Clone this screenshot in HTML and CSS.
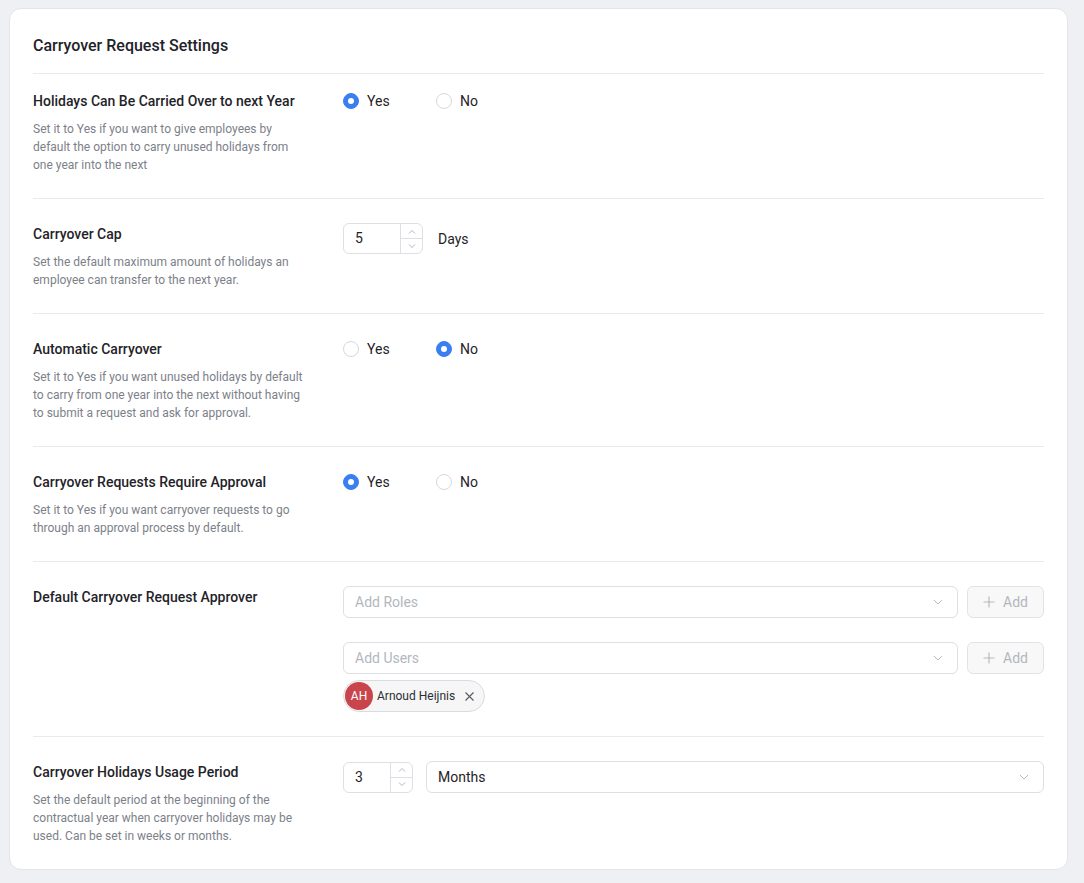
FILE: index.html
```html
<!DOCTYPE html>
<html lang="en">
<head>
    <meta charset="UTF-8">
    <meta name="viewport" content="width=device-width, initial-scale=1.0">
    <title>Carryover Request Settings</title>
    <link rel="stylesheet" href="styles.css">
</head>
<body>
    <div class="card">
        <div class="card-header">
            <h2>Carryover Request Settings</h2>
        </div>

        <!-- Carry over -->
        <div class="setting-row first">
            <div class="setting-info">
                <h3>Holidays Can Be Carried Over to next Year</h3>
                <p>Set it to Yes if you want to give employees by default the option to carry unused holidays from one year into the next</p>
            </div>
            <div class="setting-control">
                <div class="radio-group">
                    <label class="radio-option"><span class="radio checked"></span>Yes</label>
                    <label class="radio-option"><span class="radio"></span>No</label>
                </div>
            </div>
        </div>

        <!-- Cap -->
        <div class="setting-row">
            <div class="setting-info">
                <h3>Carryover Cap</h3>
                <p>Set the default maximum amount of holidays an employee can transfer to the next year.</p>
            </div>
            <div class="setting-control">
                <div class="inline-row">
                    <div class="number-input wide">
                        <span class="number-value">5</span>
                        <div class="stepper">
                            <span class="step">
                                <svg width="8" height="5" viewBox="0 0 8 5"><path d="M1 4.5L4 1.5L7 4.5" fill="none" stroke="#a9adb4" stroke-width="0.9"/></svg>
                            </span>
                            <span class="step">
                                <svg width="8" height="5" viewBox="0 0 8 5"><path d="M1 0.5L4 3.5L7 0.5" fill="none" stroke="#a9adb4" stroke-width="0.9"/></svg>
                            </span>
                        </div>
                    </div>
                    <span class="unit">Days</span>
                </div>
            </div>
        </div>

        <!-- Automatic -->
        <div class="setting-row">
            <div class="setting-info">
                <h3>Automatic Carryover</h3>
                <p>Set it to Yes if you want unused holidays by default to carry from one year into the next without having to submit a request and ask for approval.</p>
            </div>
            <div class="setting-control">
                <div class="radio-group">
                    <label class="radio-option"><span class="radio"></span>Yes</label>
                    <label class="radio-option"><span class="radio checked"></span>No</label>
                </div>
            </div>
        </div>

        <!-- Approval -->
        <div class="setting-row">
            <div class="setting-info">
                <h3>Carryover Requests Require Approval</h3>
                <p>Set it to Yes if you want carryover requests to go through an approval process by default.</p>
            </div>
            <div class="setting-control">
                <div class="radio-group">
                    <label class="radio-option"><span class="radio checked"></span>Yes</label>
                    <label class="radio-option"><span class="radio"></span>No</label>
                </div>
            </div>
        </div>

        <!-- Approver -->
        <div class="setting-row">
            <div class="setting-info">
                <h3>Default Carryover Request Approver</h3>
            </div>
            <div class="setting-control approvers">
                <div class="inline-row">
                    <div class="select">
                        <span class="placeholder">Add Roles</span>
                        <svg class="chevron" width="10" height="6" viewBox="0 0 10 6"><path d="M1 1L5 5L9 1" fill="none" stroke="#b5b9c0" stroke-width="1"/></svg>
                    </div>
                    <button class="add-btn" disabled>
                        <svg width="12" height="12" viewBox="0 0 12 12"><path d="M6 0.5V11.5M0.5 6H11.5" stroke="#b5b9c0" stroke-width="1.2"/></svg>
                        Add
                    </button>
                </div>
                <div class="inline-row">
                    <div class="select">
                        <span class="placeholder">Add Users</span>
                        <svg class="chevron" width="10" height="6" viewBox="0 0 10 6"><path d="M1 1L5 5L9 1" fill="none" stroke="#b5b9c0" stroke-width="1"/></svg>
                    </div>
                    <button class="add-btn" disabled>
                        <svg width="12" height="12" viewBox="0 0 12 12"><path d="M6 0.5V11.5M0.5 6H11.5" stroke="#b5b9c0" stroke-width="1.2"/></svg>
                        Add
                    </button>
                </div>
                <div class="chips">
                    <span class="chip">
                        <span class="avatar">AH</span>
                        <span class="chip-name">Arnoud Heijnis</span>
                        <svg class="chip-remove" width="9" height="9" viewBox="0 0 9 9"><path d="M0.5 0.5L8.5 8.5M8.5 0.5L0.5 8.5" stroke="#555a61" stroke-width="1.1"/></svg>
                    </span>
                </div>
            </div>
        </div>

        <!-- Usage period -->
        <div class="setting-row last">
            <div class="setting-info">
                <h3>Carryover Holidays Usage Period</h3>
                <p>Set the default period at the beginning of the contractual year when carryover holidays may be used. Can be set in weeks or months.</p>
            </div>
            <div class="setting-control">
                <div class="inline-row tight">
                    <div class="number-input">
                        <span class="number-value">3</span>
                        <div class="stepper">
                            <span class="step">
                                <svg width="8" height="5" viewBox="0 0 8 5"><path d="M1 4.5L4 1.5L7 4.5" fill="none" stroke="#a9adb4" stroke-width="0.9"/></svg>
                            </span>
                            <span class="step">
                                <svg width="8" height="5" viewBox="0 0 8 5"><path d="M1 0.5L4 3.5L7 0.5" fill="none" stroke="#a9adb4" stroke-width="0.9"/></svg>
                            </span>
                        </div>
                    </div>
                    <div class="select">
                        <span class="value">Months</span>
                        <svg class="chevron" width="10" height="6" viewBox="0 0 10 6"><path d="M1 1L5 5L9 1" fill="none" stroke="#b5b9c0" stroke-width="1"/></svg>
                    </div>
                </div>
            </div>
        </div>
    </div>
</body>
</html>
```

FILE: styles.css
```css
:root {
    --text: #1f2329;
    --muted: #7c8189;
    --border: #dcdfe4;
    --divider: #e9eaed;
    --primary: #3a7ff2;
    --placeholder: #b3b7bd;
}

* {
    margin: 0;
    padding: 0;
    box-sizing: border-box;
}

body {
    font-family: Roboto, 'Noto Sans', sans-serif;
    background-color: #eff0f4;
    color: var(--text);
    padding: 8px 16px 14px 9px;
}

.card {
    background-color: white;
    border: 1px solid #e3e5ea;
    border-radius: 12px;
    padding: 0 23px;
}

.card-header {
    padding: 25px 0 15px;
    border-bottom: 1px solid var(--divider);
}

.card-header h2 {
    font-size: 16px;
    line-height: 24px;
    font-weight: 500;
}

.setting-row {
    display: grid;
    grid-template-columns: 286px 1fr;
    gap: 24px;
    padding: 24px 0;
    border-bottom: 1px solid var(--divider);
}

.setting-row.first {
    padding-top: 16px;
}

.setting-row.last {
    border-bottom: none;
}

.setting-info h3 {
    font-size: 14px;
    line-height: 22px;
    font-weight: 500;
}

.setting-info p {
    margin-top: 8px;
    max-width: 278px;
    font-size: 12px;
    line-height: 18px;
    color: var(--muted);
}

.radio-group {
    display: flex;
    line-height: 22px;
    font-size: 14px;
}

.radio-option {
    display: flex;
    align-items: center;
    gap: 8px;
    min-width: 93px;
    cursor: pointer;
}

.radio {
    width: 16px;
    height: 16px;
    border-radius: 50%;
    border: 1px solid #d5d8dd;
    background-color: white;
    position: relative;
}

.radio.checked {
    border-color: var(--primary);
    background-color: var(--primary);
}

.radio.checked::after {
    content: '';
    position: absolute;
    top: 4px;
    left: 4px;
    width: 6px;
    height: 6px;
    border-radius: 50%;
    background-color: white;
}

.inline-row {
    display: flex;
    align-items: center;
    gap: 9px;
}

.inline-row.tight {
    gap: 13px;
}

.number-input {
    display: flex;
    width: 70px;
    height: 31px;
    border: 1px solid var(--border);
    border-radius: 6px;
    overflow: hidden;
}

.number-input.wide {
    width: 80px;
}

.number-value {
    flex: 1;
    padding-left: 11px;
    font-size: 14px;
    line-height: 29px;
}

.stepper {
    width: 22px;
    display: flex;
    flex-direction: column;
    border-left: 1px solid var(--border);
}

.step {
    flex: 1;
    display: flex;
    align-items: center;
    justify-content: center;
}

.step + .step {
    border-top: 1px solid var(--border);
}

.unit {
    margin-left: 6px;
    font-size: 14px;
}

.approvers {
    display: flex;
    flex-direction: column;
}

.approvers .inline-row + .inline-row {
    margin-top: 24px;
}

.select {
    flex: 1;
    height: 32px;
    display: flex;
    align-items: center;
    justify-content: space-between;
    padding: 0 14px 0 11px;
    border: 1px solid var(--border);
    border-radius: 6px;
    font-size: 14px;
}

.placeholder {
    color: var(--placeholder);
}

.add-btn {
    width: 77px;
    height: 32px;
    display: flex;
    align-items: center;
    justify-content: center;
    gap: 8px;
    background-color: #f8f8f9;
    border: 1px solid #e1e3e7;
    border-radius: 6px;
    font-family: inherit;
    font-size: 14px;
    color: var(--placeholder);
}

.chips {
    margin-top: 6px;
    display: flex;
}

.chip {
    display: flex;
    align-items: center;
    height: 32px;
    padding: 1px 10px 1px 1px;
    border: 1px solid #d9dbe0;
    border-radius: 16px;
    background-color: #f6f6f7;
}

.avatar {
    width: 28px;
    height: 28px;
    border-radius: 50%;
    background-color: #c8454b;
    color: white;
    font-size: 12px;
    display: flex;
    align-items: center;
    justify-content: center;
}

.chip-name {
    margin-left: 4px;
    font-size: 12px;
    color: #2b2f35;
}

.chip-remove {
    margin-left: 10px;
}
```
